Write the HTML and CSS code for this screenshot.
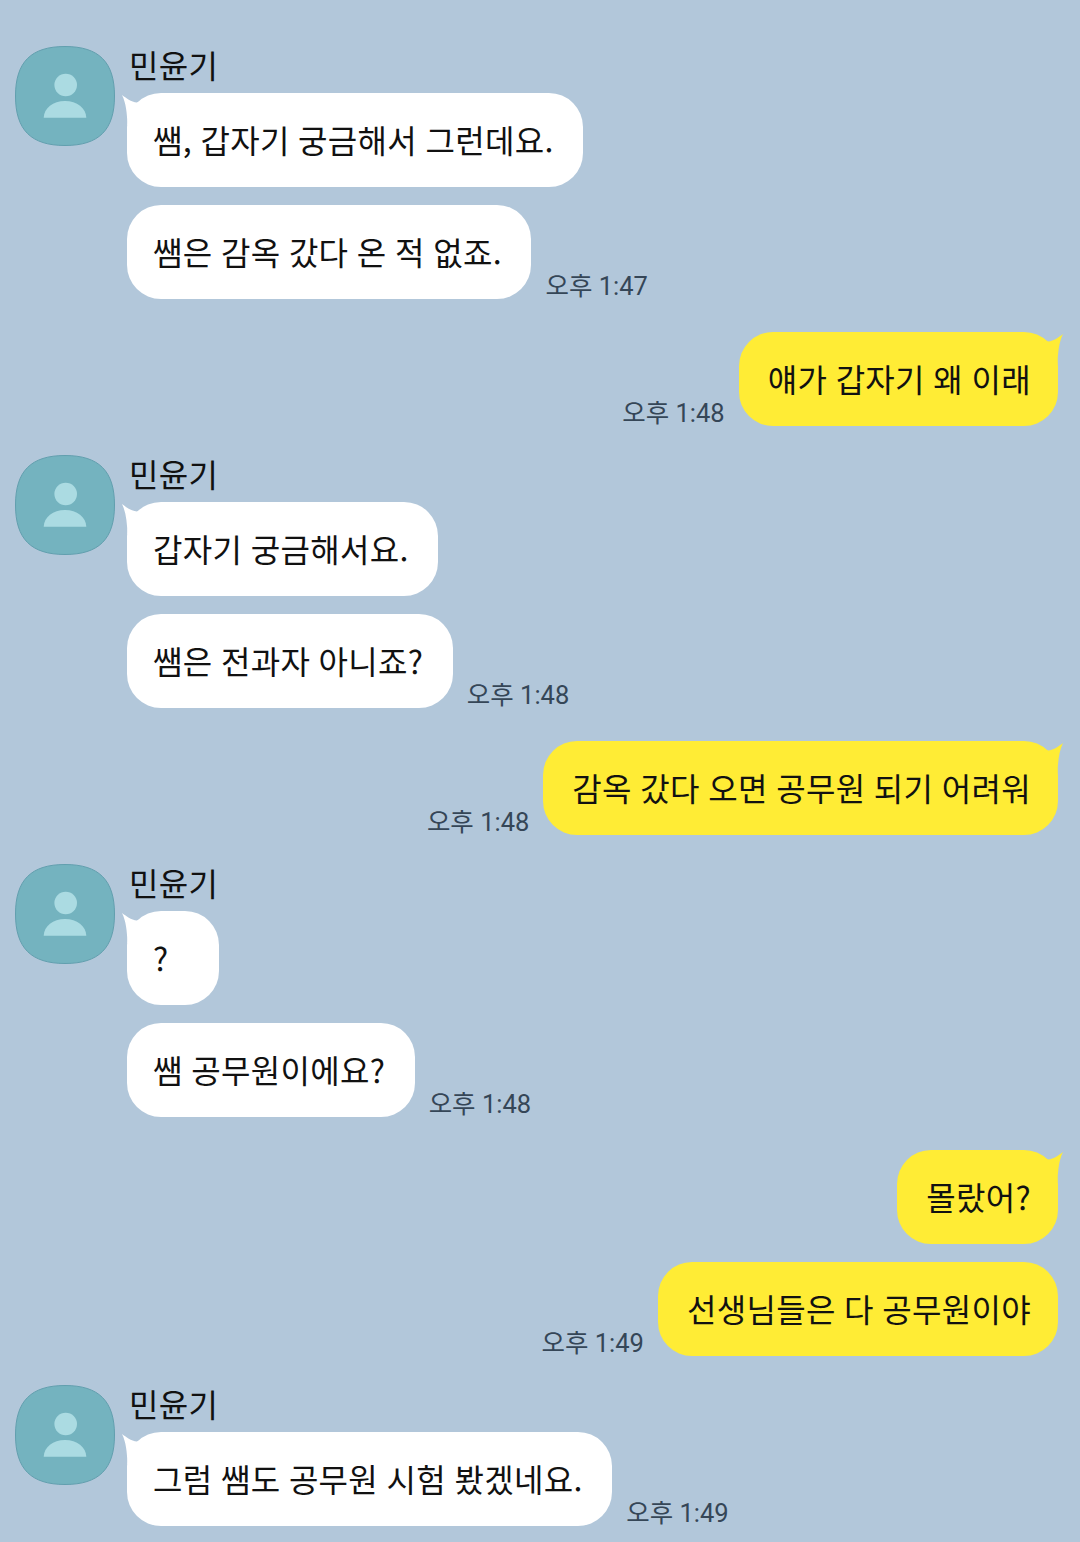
FILE: index.html
```html
<!DOCTYPE html>
<html lang="ko">
<head>
  <meta charset="UTF-8" />
  <title>민윤기</title>
  <link rel="stylesheet" href="styles.css">
</head>
<body>
  <svg width="0" height="0" class="defs">
    <symbol id="avatar" viewBox="0 0 100 100">
      <path d="M50 0.5C84 0.5 99.500 16 99.500 50C99.500 84 84 99.500 50 99.500C16 99.500 0.500 84 0.500 50C0.500 16 16 0.500 50 0.500Z" fill="#74b3bf" stroke="#629fae" stroke-width="1"/>
      <circle cx="50.700" cy="39" r="11.300" fill="#abdbe2"/>
      <path d="M28.700 71.700C29 62 38 55 50 55C62 55 71 62 71.300 71.700Z" fill="#abdbe2"/>
    </symbol>
  </svg>

  <div class="chat">
    <section class="group in">
      <svg class="avatar"><use href="#avatar"/></svg>
      <div class="body">
        <div class="name">민윤기</div>
        <div class="row"><div class="bubble first">쌤, 갑자기 궁금해서 그런데요.</div></div>
        <div class="row"><div class="bubble">쌤은 감옥 갔다 온 적 없죠.</div><span class="time">오후 1:47</span></div>
      </div>
    </section>

    <section class="group out">
      <div class="row"><span class="time">오후 1:48</span><div class="bubble first">얘가 갑자기 왜 이래</div></div>
    </section>

    <section class="group in">
      <svg class="avatar"><use href="#avatar"/></svg>
      <div class="body">
        <div class="name">민윤기</div>
        <div class="row"><div class="bubble first">갑자기 궁금해서요.</div></div>
        <div class="row"><div class="bubble">쌤은 전과자 아니죠?</div><span class="time">오후 1:48</span></div>
      </div>
    </section>

    <section class="group out">
      <div class="row"><span class="time">오후 1:48</span><div class="bubble first">감옥 갔다 오면 공무원 되기 어려워</div></div>
    </section>

    <section class="group in">
      <svg class="avatar"><use href="#avatar"/></svg>
      <div class="body">
        <div class="name">민윤기</div>
        <div class="row"><div class="bubble first">?</div></div>
        <div class="row"><div class="bubble">쌤 공무원이에요?</div><span class="time">오후 1:48</span></div>
      </div>
    </section>

    <section class="group out">
      <div class="row"><div class="bubble first">몰랐어?</div></div>
      <div class="row"><span class="time">오후 1:49</span><div class="bubble">선생님들은 다 공무원이야</div></div>
    </section>

    <section class="group in">
      <svg class="avatar"><use href="#avatar"/></svg>
      <div class="body">
        <div class="name">민윤기</div>
        <div class="row"><div class="bubble first">그럼 쌤도 공무원 시험 봤겠네요.</div><span class="time">오후 1:49</span></div>
      </div>
    </section>
  </div>
</body>
</html>
```

FILE: styles.css
```css
html, body {
  margin: 0;
  padding: 0;
}
body {
  background: #b2c7da;
  color: #111;
  font-family: "Noto Sans CJK KR", "Noto Sans", sans-serif;
  height: 1542px;
  overflow: hidden;
}
.defs {
  display: block;
}
.chat {
  padding: 46px 22px 0 15px;
  display: flex;
  flex-direction: column;
}
.group {
  display: flex;
  gap: 18px;
}
.group.in {
  flex-direction: row;
  gap: 12px;
  margin-bottom: 29px;
}
.group.out {
  flex-direction: column;
  align-items: flex-end;
  margin-top: 4px;
  margin-bottom: 29px;
}
.avatar {
  width: 100px;
  height: 100px;
  flex: none;
}
.body {
  display: flex;
  flex-direction: column;
  gap: 18px;
}
.name {
  height: 29px;
  margin-left: 2px;
  font-size: 32px;
  line-height: 36px;
  letter-spacing: 0.3px;
  color: #111;
}
.row {
  display: flex;
  align-items: flex-end;
  gap: 14px;
}
.bubble {
  position: relative;
  height: 94px;
  min-width: 92px;
  box-sizing: border-box;
  padding: 0 29.500px 0 26px;
  border-radius: 34px;
  background: #fff;
  font-size: 32px;
  line-height: 92px;
  letter-spacing: 0.3px;
  word-spacing: -0.8px;
  white-space: nowrap;
}
.out .bubble {
  padding: 0 27px 0 29px;
  background: #ffec35;
}
.bubble.first::before {
  content: "";
  position: absolute;
  top: 2px;
  width: 30px;
  height: 30px;
  background: inherit;
}
.in .bubble.first::before {
  left: -5px;
  clip-path: path("M0 0C4 3 9 7 15 7.500L30 0L30 30L5.500 30C5 18 4 8 0 0Z");
}
.out .bubble.first::before {
  right: -5px;
  clip-path: path("M30 0C26 3 21 7 15 7.500L0 0L0 30L24.500 30C25 18 26 8 30 0Z");
}
.time {
  font-family: Roboto, "Noto Sans CJK KR", sans-serif;
  font-size: 25.500px;
  line-height: 26px;
  color: #354657;
  margin-left: 0;
  white-space: nowrap;
}
```
